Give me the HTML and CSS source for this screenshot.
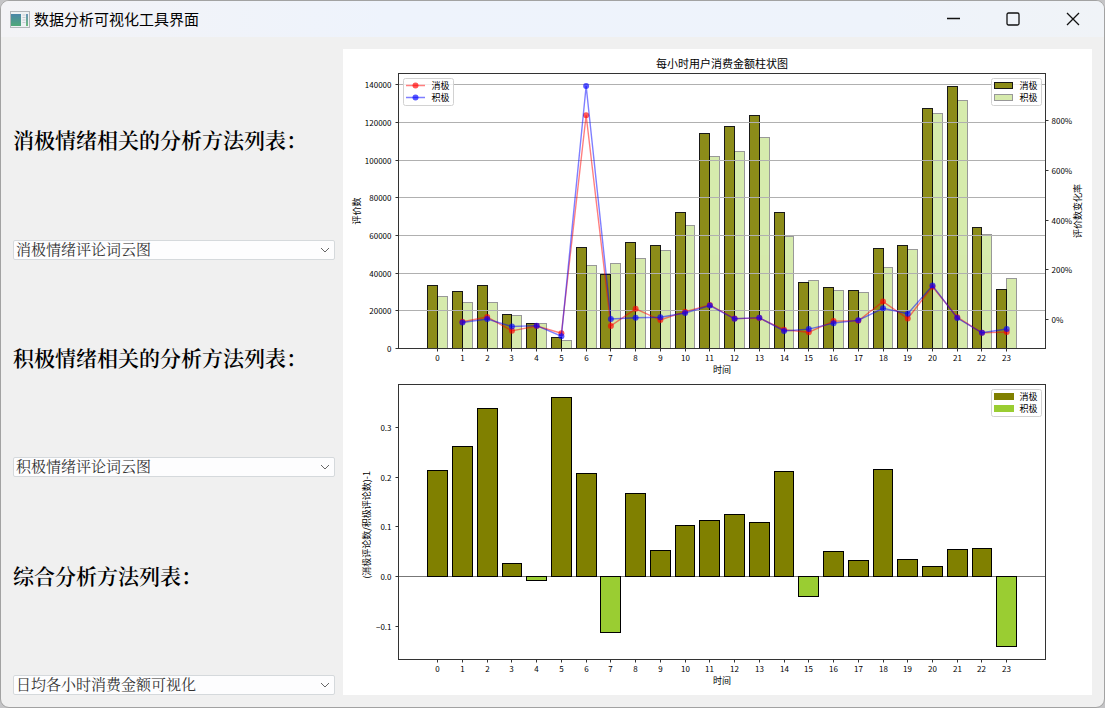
FILE: index.html
```html
<!DOCTYPE html>
<html lang="zh-CN">
<head>
<meta charset="utf-8">
<title>数据分析可视化工具界面</title>
<link rel="stylesheet" href="styles.css">
</head>
<body>
<div class="window">
  <header class="titlebar">
    <svg class="app-icon" width="20" height="17" viewBox="0 0 20 17" aria-hidden="true">
      <defs>
        <linearGradient id="screen" x1="0" y1="0" x2="0" y2="1">
          <stop offset="0" stop-color="#4a86a8"/><stop offset="1" stop-color="#4fa878"/>
        </linearGradient>
        <linearGradient id="side" x1="0" y1="0" x2="0" y2="1">
          <stop offset="0" stop-color="#6a93b8"/><stop offset="1" stop-color="#6dbb7c"/>
        </linearGradient>
      </defs>
      <rect x="0.5" y="0.5" width="19" height="16" fill="#eef1f3" stroke="#b3b6b9"/>
      <rect x="1" y="3" width="10" height="12" fill="url(#screen)"/>
      <path d="M12.5 4h3M12.5 6.500h3M12.500 9h3M12.500 11.500h3" stroke="#c5cbd0" fill="none"/>
      <rect x="16" y="3" width="2" height="12" fill="url(#side)"/>
    </svg>
    <h1 class="title">数据分析可视化工具界面</h1>
    <div class="controls">
      <button class="control" type="button" aria-label="最小化">
        <svg width="14" height="14" viewBox="0 0 14 14"><path d="M1 6.500h13" /></svg>
      </button>
      <button class="control" type="button" aria-label="最大化">
        <svg width="14" height="14" viewBox="0 0 14 14"><rect x="1" y="1" width="12" height="12" rx="1.500"/></svg>
      </button>
      <button class="control" type="button" aria-label="关闭">
        <svg width="14" height="14" viewBox="0 0 14 14"><path d="M1 1l12 12M13 1L1 13"/></svg>
      </button>
    </div>
  </header>
  <main class="content">
    <form class="panel">
      <label class="heading" for="negative">消极情绪相关的分析方法列表：</label>
      <div class="combo">
        <select class="select" id="negative"><option>消极情绪评论词云图</option></select>
        <svg class="chevron" width="10" height="6" viewBox="0 0 10 6" aria-hidden="true"><path d="M1 1l4 4 4-4"/></svg>
      </div>
      <label class="heading" for="positive">积极情绪相关的分析方法列表：</label>
      <div class="combo">
        <select class="select" id="positive"><option>积极情绪评论词云图</option></select>
        <svg class="chevron" width="10" height="6" viewBox="0 0 10 6" aria-hidden="true"><path d="M1 1l4 4 4-4"/></svg>
      </div>
      <label class="heading" for="overall">综合分析方法列表：</label>
      <div class="combo">
        <select class="select" id="overall"><option>日均各小时消费金额可视化</option></select>
        <svg class="chevron" width="10" height="6" viewBox="0 0 10 6" aria-hidden="true"><path d="M1 1l4 4 4-4"/></svg>
      </div>
    </form>
    <section class="figure">
      <svg class="chart" id="chart" viewBox="0 0 749 646" role="img" aria-label="每小时用户消费金额柱状图"></svg>
    </section>
  </main>
</div>
<script src="chart.js"></script>
</body>
</html>
```
FILE: styles.css
```css
* {
  box-sizing: border-box;
}

body {
  margin: 0;
  background: #c4c4c6;
  color: #000;
  font-family: "Noto Sans CJK SC", sans-serif;
}

.window {
  display: flex;
  flex-direction: column;
  height: 100vh;
  border: 1px solid #a2a2a2;
  border-radius: 9px;
  background: #f0f0f0;
  overflow: hidden;
}

.titlebar {
  display: flex;
  align-items: center;
  flex: none;
  height: 36px;
  padding-left: 9px;
  background: linear-gradient(90deg, #f3f3f6, #eef3fc 35%, #eef3fb 80%, #f0f3f7);
}

.app-icon {
  flex: none;
  margin-right: 4px;
}

.title {
  flex: 1;
  margin: 0;
  font-size: 15px;
  font-weight: 400;
  line-height: 20px;
}

.controls {
  display: flex;
  align-self: stretch;
  padding-right: 1px;
}

.control {
  display: flex;
  align-items: center;
  justify-content: center;
  width: 60px;
  padding: 0;
  border: 0;
  background: transparent;
}

.control svg {
  fill: none;
  stroke: #111;
  stroke-width: 1.3;
}

.content {
  display: flex;
  flex: 1;
  gap: 8px;
  min-height: 0;
  padding: 12px;
}

.panel {
  display: flex;
  flex-direction: column;
  flex: 322 1 0;
  gap: 7px;
  margin: 0;
}

.heading {
  display: flex;
  align-items: center;
  flex: 1;
  padding-bottom: 3px;
  font-family: SimSun, "Noto Serif CJK SC", "Noto Sans CJK SC", serif;
  font-size: 21px;
  font-weight: 600;
  line-height: 28px;
  white-space: nowrap;
}

.combo {
  position: relative;
  flex: none;
}

.select {
  display: block;
  width: 100%;
  height: 20px;
  padding: 0 24px 2px 2px;
  border: 1px solid #d5d9dc;
  border-radius: 2px;
  background: #fdfdfe;
  color: #333;
  font-family: SimSun, "Noto Serif CJK SC", "Noto Sans CJK SC", serif;
  font-size: 15px;
  font-weight: 400;
  line-height: 16px;
  appearance: none;
}

.chevron {
  position: absolute;
  top: 7px;
  right: 5px;
  fill: none;
  stroke: #666;
  pointer-events: none;
}

.figure {
  flex: 749 1 0;
  min-width: 0;
  background: #fff;
}

.chart {
  display: block;
  width: 100%;
  height: 100%;
  font-family: "Noto Sans CJK SC", sans-serif;
  font-size: 9px;
}

.tick-label {
  font-size: 8px;
}

.chart-title {
  font-size: 11px;
}

.frame {
  fill: none;
  stroke: #333;
}

.tick {
  stroke: #333;
}

.grid {
  stroke: #b0b0b0;
}

.zero {
  stroke: #777;
}

.bar-negative,
.bar-positive {
  stroke: #000;
}

.bar-negative {
  fill: #808000;
}

.bar-positive {
  fill: #9acd32;
}

.strong {
  opacity: 0.9;
}

.faint {
  opacity: 0.4;
}

.plain {
  stroke: none;
}

.rate {
  fill: none;
  stroke-width: 1.4;
  stroke-opacity: 0.5;
}

.rate-negative {
  stroke: #f00;
}

.rate-positive {
  stroke: #00f;
}

.dot-negative {
  fill: #f00;
  fill-opacity: 0.65;
}

.dot-positive {
  fill: #00f;
  fill-opacity: 0.65;
}

.legend {
  fill: #fff;
  fill-opacity: 0.8;
  stroke: #d2d2d2;
}
```
FILE: chart.js
```js
const negative = [33600, 30450, 33270, 17900, 13100, 5790, 53450, 39470, 56300, 54900, 72000, 114000,
  117700, 123900, 72400, 35000, 32600, 30800, 52900, 54900, 127300, 138900, 64100, 31300];
const positive = [27800, 24250, 24600, 17500, 13100, 4250, 44250, 44960, 47960, 52000, 65500, 102100,
  104600, 111900, 59650, 36300, 30800, 29700, 43000, 52740, 124800, 131700, 60500, 37000];
const ratio = [0.2125, 0.262, 0.3385, 0.0255, -0.008, 0.3606, 0.2071, -0.112, 0.1669, 0.0516, 0.1019,
  0.112, 0.1247, 0.108, 0.2111, -0.04, 0.0503, 0.0322, 0.2151, 0.0335, 0.0194, 0.0543, 0.0556, -0.1414];

const svg = document.getElementById('chart');
const LEFT = 55.5, RIGHT = 702.5;
const hourX = h => 94.7 + h * 24.74;
const countY = v => 299.5 - v / 20000 * 37.67;
const rateY = r => 270.4 - r * 24.8;
const ratioY = r => 527.5 - r * 497.3;
const snap = v => Math.floor(v) + 0.5;

function add(name, attrs, text) {
  const node = document.createElementNS('http://www.w3.org/2000/svg', name);
  for (const key in attrs) node.setAttribute(key, attrs[key]);
  if (text !== undefined) node.textContent = text;
  svg.appendChild(node);
}
function line(x1, y1, x2, y2, cls) {
  add('line', { x1, y1, x2, y2, class: cls });
}
function label(x, y, text, anchor, cls) {
  add('text', { x, y, 'text-anchor': anchor, class: cls || '' }, text);
}
function bar(x1, x2, y1, y2, cls) {
  const left = snap(x1), top = snap(Math.min(y1, y2));
  add('rect', { x: left, y: top, width: snap(x2) - left, height: snap(Math.max(y1, y2)) - top, class: cls });
}
function verticalLabel(x, y, text) {
  add('text', { transform: `translate(${x} ${y}) rotate(-90)`, 'text-anchor': 'middle' }, text);
}
function hours(bottom) {
  for (let h = 0; h < 24; h++) {
    const x = snap(hourX(h));
    line(x, bottom, x, bottom + 3, 'tick');
    label(x, bottom + 12, h, 'middle', 'tick-label');
  }
  label(379, bottom + 24, '时间', 'middle');
}
function rateSeries(data, name) {
  const points = data.slice(1).map((v, i) => [hourX(i + 1), rateY(v / data[i] - 1)]);
  add('polyline', { points: points.map(p => p.join(',')).join(' '), class: `rate rate-${name}` });
  points.forEach(([cx, cy]) => add('circle', { cx, cy, r: 3, class: `dot-${name}` }));
}
function legendBox(x, y) {
  add('rect', { x, y, width: 50, height: 27, rx: 2, class: 'legend' });
  label(x + 28, y + 10, '消极', 'start');
  label(x + 28, y + 22, '积极', 'start');
}

/* Hourly counts with the rate of change */
label(379, 19, '每小时用户消费金额柱状图', 'middle', 'chart-title');
for (let h = 0; h < 24; h++) {
  const x = hourX(h);
  bar(x - 9.9, x, countY(negative[h]), 299.5, 'bar-negative strong');
  bar(x, x + 9.9, countY(positive[h]), 299.5, 'bar-positive faint');
}
for (let v = 0; v <= 140000; v += 20000) {
  const y = snap(countY(v));
  line(LEFT, y, RIGHT, y, 'grid');
  line(LEFT - 3, y, LEFT, y, 'tick');
  label(LEFT - 7, y + 3, v, 'end', 'tick-label');
}
for (let r = 0; r <= 8; r += 2) {
  const y = snap(rateY(r));
  line(RIGHT, y, RIGHT + 3, y, 'tick');
  label(RIGHT + 6, y + 3, `${r * 100}%`, 'start', 'tick-label');
}
rateSeries(negative, 'negative');
rateSeries(positive, 'positive');
add('rect', { x: LEFT, y: 24.5, width: RIGHT - LEFT, height: 275, class: 'frame' });
hours(299.5);
verticalLabel(17, 162, '评价数');
verticalLabel(738, 162, '评价数变化率');

legendBox(60.5, 29.5);
line(63, 36.5, 82, 36.5, 'rate rate-negative');
add('circle', { cx: 72.5, cy: 36.5, r: 3, class: 'dot-negative' });
line(63, 48.5, 82, 48.5, 'rate rate-positive');
add('circle', { cx: 72.5, cy: 48.5, r: 3, class: 'dot-positive' });

legendBox(648.5, 29.5);
add('rect', { x: 651.5, y: 33.5, width: 18, height: 6, class: 'bar-negative strong' });
add('rect', { x: 651.5, y: 45.5, width: 18, height: 6, class: 'bar-positive faint' });

/* Ratio of negative to positive counts */
line(LEFT, 527.5, RIGHT, 527.5, 'zero');
ratio.forEach((r, h) => {
  const x = hourX(h);
  bar(x - 9.9, x + 9.9, ratioY(r), 527.5, r > 0 ? 'bar-negative' : 'bar-positive');
});
for (let i = -1; i <= 3; i++) {
  const y = snap(ratioY(i / 10));
  line(LEFT - 3, y, LEFT, y, 'tick');
  label(LEFT - 7, y + 3, (i < 0 ? '−' : '') + (Math.abs(i) / 10).toFixed(1), 'end', 'tick-label');
}
add('rect', { x: LEFT, y: 335.5, width: RIGHT - LEFT, height: 275, class: 'frame' });
hours(610.5);
verticalLabel(27, 476, '(消极评论数/积极评论数)-1');

legendBox(648.5, 340.5);
add('rect', { x: 651, y: 344, width: 20, height: 7, class: 'bar-negative plain' });
add('rect', { x: 651, y: 356, width: 20, height: 7, class: 'bar-positive plain' });
```
